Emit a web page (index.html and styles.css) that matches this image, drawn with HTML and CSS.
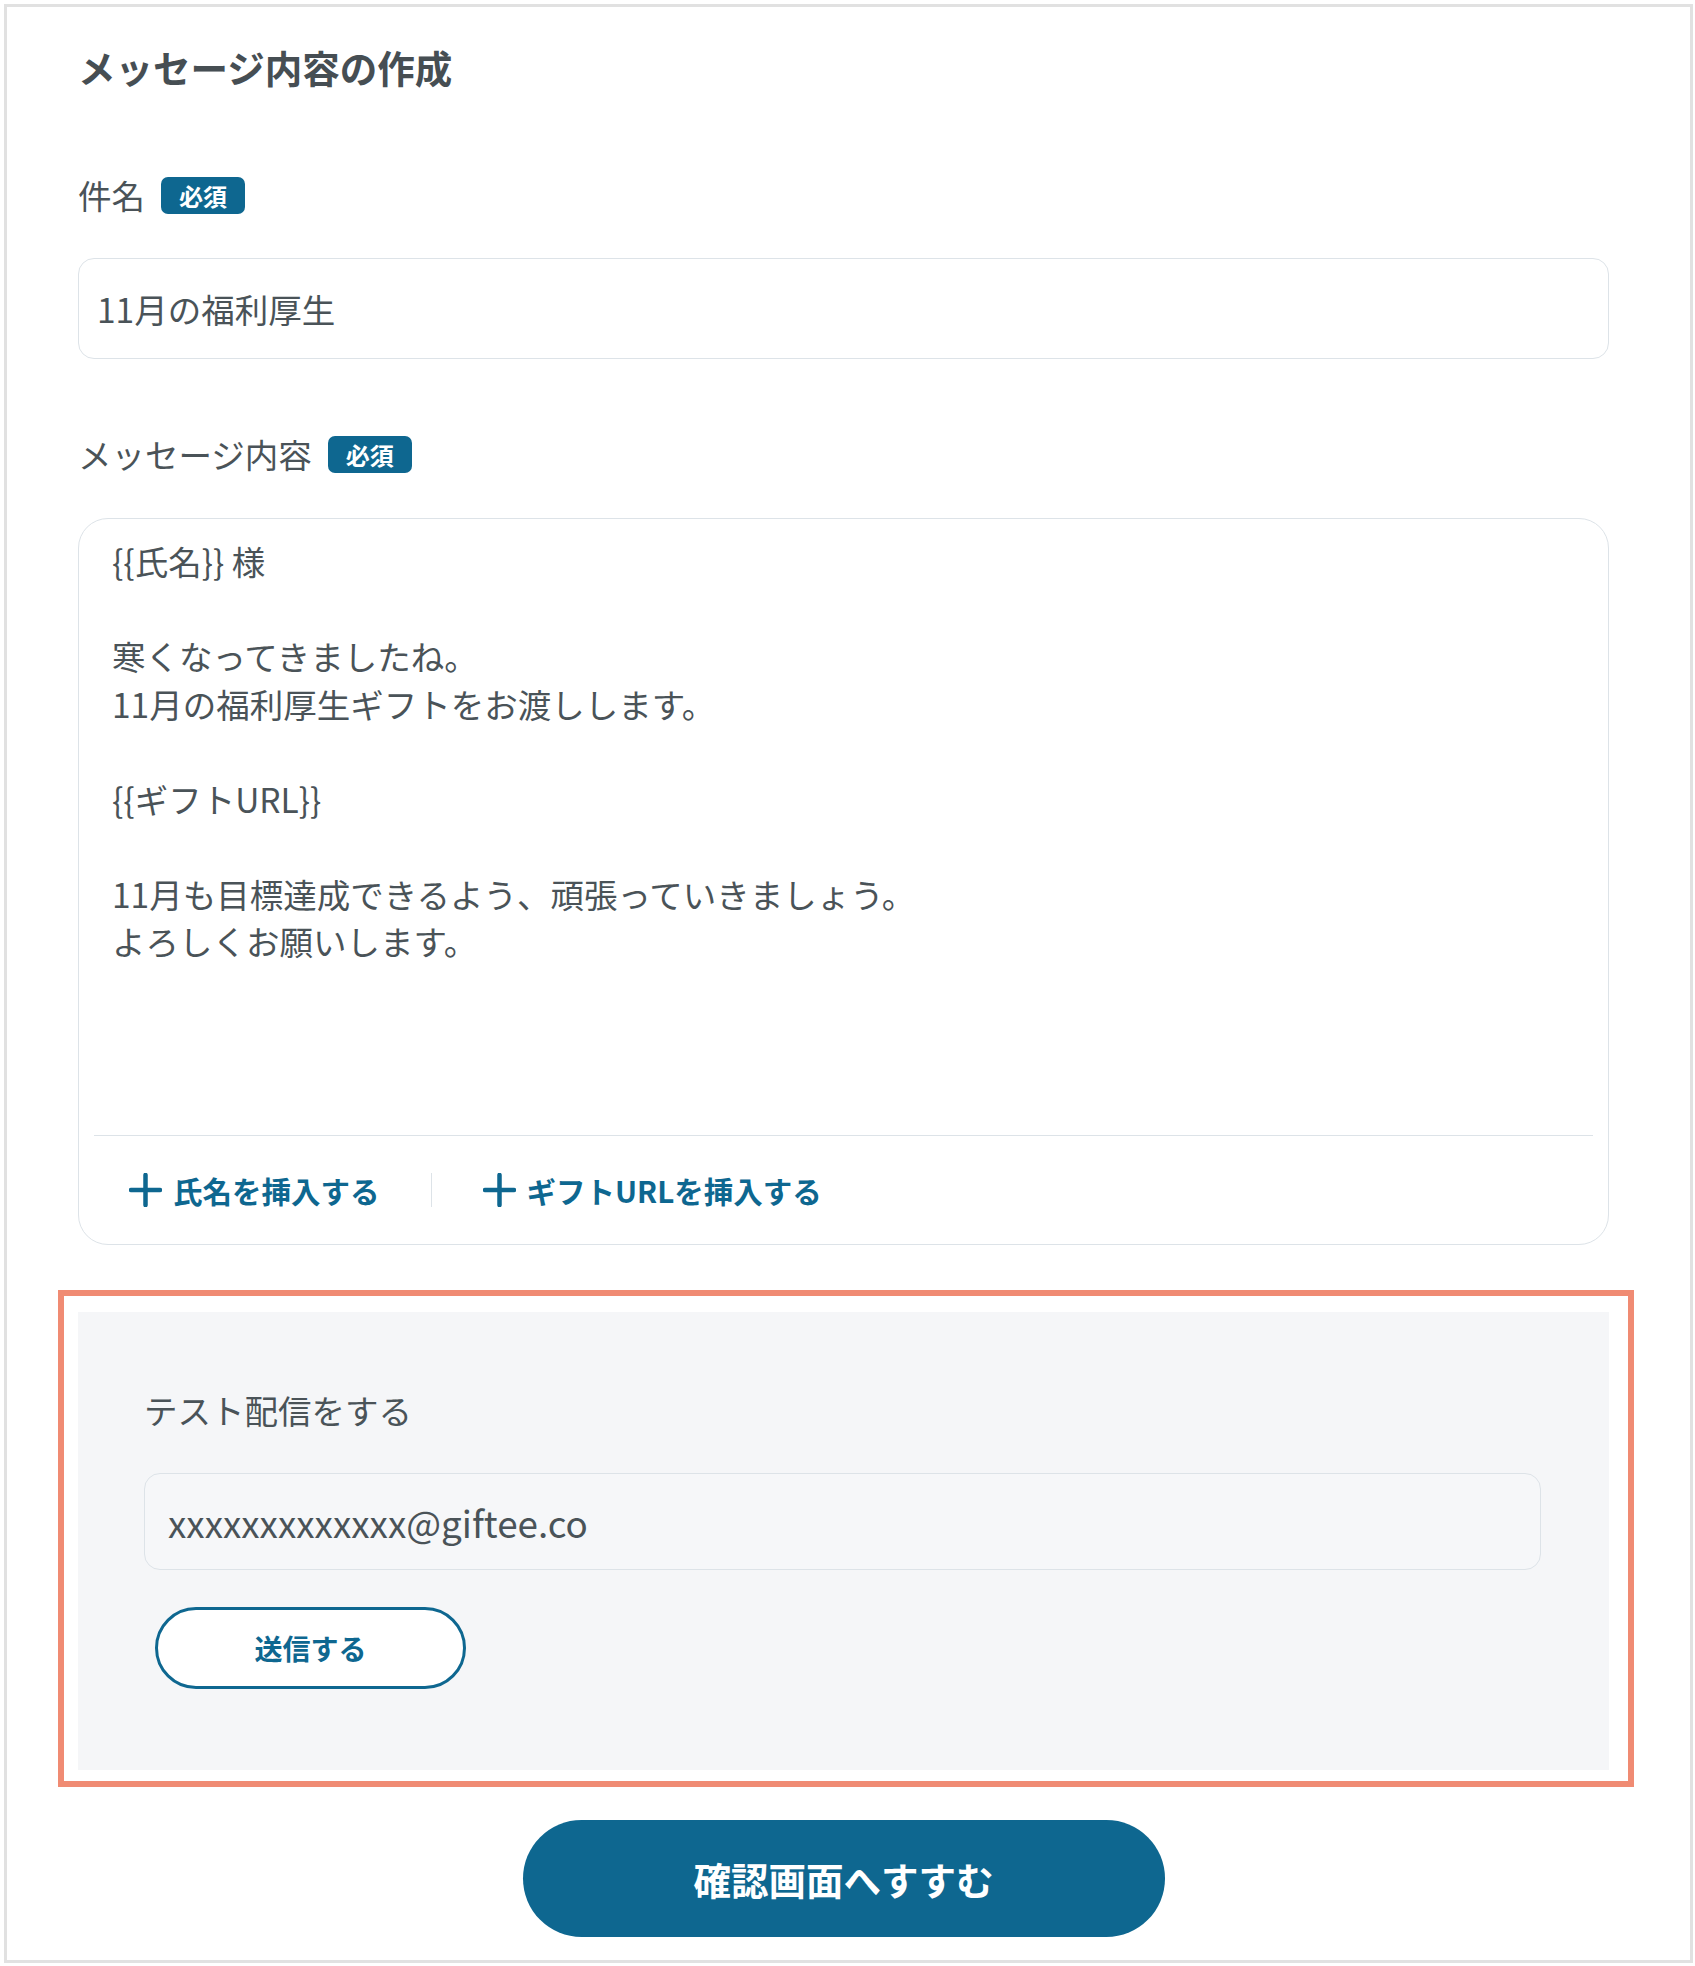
FILE: index.html
```html
<!DOCTYPE html>
<html lang="ja">
<head>
<meta charset="utf-8">
<title>メッセージ内容の作成</title>
<link rel="stylesheet" href="styles.css">
</head>
<body>
<div class="frame">
  <h1 class="title">メッセージ内容の作成</h1>

  <div class="field subject">
    <div class="label-row"><span class="label">件名</span><span class="badge">必須</span></div>
    <div class="input">11月の福利厚生</div>
  </div>

  <div class="field message">
    <div class="label-row"><span class="label">メッセージ内容</span><span class="badge">必須</span></div>
    <div class="textarea">
      <div class="ta-body">{{氏名}} 様

寒くなってきましたね。
11月の福利厚生ギフトをお渡しします。

{{ギフトURL}}

11月も目標達成できるよう、頑張っていきましょう。
よろしくお願いします。</div>
      <div class="insert-row">
        <span class="insert">
          <svg class="plus" viewBox="0 0 33 34" width="33" height="34"><path d="M16.5 2v30M2 17h29" fill="none" stroke="currentColor" stroke-width="4.5" stroke-linecap="round"/></svg>
          <span>氏名を挿入する</span>
        </span>
        <span class="sep"></span>
        <span class="insert">
          <svg class="plus" viewBox="0 0 33 34" width="33" height="34"><path d="M16.5 2v30M2 17h29" fill="none" stroke="currentColor" stroke-width="4.5" stroke-linecap="round"/></svg>
          <span>ギフトURLを挿入する</span>
        </span>
      </div>
    </div>
  </div>

  <section class="test-panel">
    <div class="test-label">テスト配信をする</div>
    <div class="email">xxxxxxxxxxxxx@giftee.co</div>
    <span class="send">送信する</span>
  </section>

  <div class="actions">
    <span class="confirm">確認画面へすすむ</span>
  </div>
</div>
</body>
</html>
```

FILE: styles.css
```css
* { box-sizing: border-box; }

body {
  margin: 0;
  background: #ffffff;
  font-family: "Noto Sans CJK JP", "Noto Sans", sans-serif;
  color: #4a5358;
}

.frame {
  margin: 4px 2px 0 4px;
  border: 3px solid #e1e1e1;
  padding: 33px 81px 23px 71px;
}

.title {
  margin: 0;
  font-size: 37.5px;
  line-height: 54px;
  font-weight: 700;
  color: #464e53;
}

.subject { margin-top: 77px; }
.message { margin-top: 71px; }

.label-row {
  display: flex;
  align-items: center;
  gap: 16px;
  height: 48px;
}

.label {
  font-size: 33.5px;
  line-height: 48px;
}

.badge {
  background: #0e6790;
  color: #ffffff;
  font-size: 24px;
  font-weight: 700;
  line-height: 37px;
  padding: 0 18px;
  border-radius: 7px;
}

.input {
  margin-top: 39px;
  height: 101px;
  border: 1px solid #dde3e8;
  border-radius: 16px;
  padding: 0 18px;
  display: flex;
  align-items: center;
  font-size: 33.5px;
}

.textarea {
  margin-top: 40px;
  border: 1px solid #dde3e8;
  border-radius: 30px;
}

.ta-body {
  height: 616px;
  padding: 18px 33px 0;
  font-size: 33.5px;
  line-height: 47.5px;
  white-space: pre-line;
}

.insert-row {
  margin: 0 15px;
  border-top: 1px solid #dde3e8;
  height: 109px;
  display: flex;
  align-items: center;
  padding-left: 35px;
}

.insert {
  display: flex;
  align-items: center;
  gap: 11px;
  color: #0e6790;
  font-size: 29.5px;
  font-weight: 700;
}

.plus { display: block; }

.sep {
  width: 1px;
  height: 34px;
  background: #dde3e8;
  margin: 0 51px;
}

.test-panel {
  position: relative;
  margin-top: 67px;
  background: #f5f6f8;
  padding: 74px 68px 81px 66px;
}

/* annotation frame drawn over the panel */
.test-panel::after {
  content: "";
  position: absolute;
  left: -20px;
  right: -25px;
  top: -22px;
  bottom: -17px;
  border: 6px solid #f08b73;
  pointer-events: none;
}

.test-label {
  font-size: 33.5px;
  line-height: 48px;
}

.email {
  margin-top: 39px;
  height: 97px;
  border: 1px solid #dde3e8;
  border-radius: 16px;
  background: #f6f7f9;
  padding: 0 23px;
  display: flex;
  align-items: center;
  font-size: 36.8px;
}

.send {
  margin: 37px 0 0 11px;
  width: 311px;
  height: 82px;
  border: 3px solid #0e6790;
  border-radius: 41px;
  background: #ffffff;
  color: #0e6790;
  font-size: 28px;
  font-weight: 700;
  display: flex;
  align-items: center;
  justify-content: center;
}

.actions {
  margin-top: 50px;
  display: flex;
  justify-content: center;
}

.confirm {
  width: 642px;
  height: 117px;
  border-radius: 59px;
  background: #0e6790;
  color: #ffffff;
  font-size: 37.5px;
  font-weight: 700;
  display: flex;
  align-items: center;
  justify-content: center;
}
```
